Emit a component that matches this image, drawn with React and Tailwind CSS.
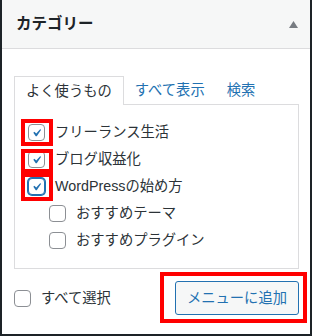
import React from "react";

// WordPress メニュー編集画面の「カテゴリー」パネル
function Check({ checked, focused }) {
  return (
    <span
      className={`flex h-[17px] w-[17px] shrink-0 items-center justify-center rounded-[4px] border bg-white ${
        focused ? "border-[#2271b1] shadow-[0_0_0_1px_#2271b1]" : "border-[#8c8f94]"
      }`}
    >
      {checked && (
        <svg viewBox="0 0 20 20" className="h-[18px] w-[18px] fill-[#2271b1]">
          <path d="M14.83 4.89l1.34.94-5.81 8.38H9.02L5.78 9.67l1.34-1.25 2.57 2.4z" />
        </svg>
      )}
    </span>
  );
}

function Row({ label, checked, focused, child }) {
  return (
    <div className={`flex h-[27px] items-center gap-[10px] ${child ? "ml-[21px]" : ""}`}>
      <Check checked={checked} focused={focused} />
      <span className="text-[14.3px] leading-none">{label}</span>
    </div>
  );
}

const items = [
  { label: "フリーランス生活", checked: true },
  { label: "ブログ収益化", checked: true },
  { label: "WordPressの始め方", checked: true, focused: true },
  { label: "おすすめテーマ", child: true },
  { label: "おすすめプラグイン", child: true },
];

export default function App() {
  return (
    <div className="relative h-[336px] w-[312px] overflow-hidden border-x-2 border-b-2 border-[#1d2327] bg-white font-['Liberation_Sans','Noto_Sans_CJK_JP',sans-serif] text-[#2c3338]">
      {/* Header */}
      <div className="flex h-[49px] items-center justify-between border-b border-[#dcdcde] bg-[#f6f7f7] pl-[14px] pr-[12px]">
        <h3 className="text-[15.5px] font-semibold leading-none text-[#1d2327]">カテゴリー</h3>
        <svg width="9" height="7" viewBox="0 0 9 7" className="fill-[#787c82]">
          <path d="M4.5 0L9 7H0z" />
        </svg>
      </div>

      {/* Body */}
      <div className="pl-[12px] pr-[11px] pt-[27px]">
        <div className="flex h-[28px] items-end text-[14.3px] leading-none">
          <div className="relative z-10 -mb-px flex h-[29px] items-center border border-b-0 border-[#dcdcde] bg-white px-[11px]">
            よく使うもの
          </div>
          <div className="flex h-[28px] items-center px-[11px] text-[#2271b1]">すべて表示</div>
          <div className="flex h-[28px] items-center px-[11px] text-[#2271b1]">検索</div>
        </div>
        <div className="h-[165px] border border-[#dcdcde] pl-[13px] pt-[14px]">
          {items.map((it) => (
            <Row key={it.label} {...it} />
          ))}
        </div>

        <div className="mt-[12px] flex items-center justify-between">
          <div className="flex items-center gap-[10px]">
            <Check />
            <span className="text-[14.3px] leading-none">すべて選択</span>
          </div>
          <button className="h-[34px] rounded-[3px] border border-[#2271b1] bg-[#f6f7f7] px-[11px] text-[14.3px] leading-none text-[#2271b1]">
            メニューに追加
          </button>
        </div>
      </div>

      {/* 赤枠の注釈 */}
      <div className="absolute left-[19px] top-[119px] h-[27px] w-[32px] border-4 border-[#ff0000]" />
      <div className="absolute left-[19px] top-[149px] h-[24px] w-[32px] border-4 border-[#ff0000]" />
      <div className="absolute left-[19px] top-[173px] h-[28px] w-[32px] border-4 border-[#ff0000]" />
      <div className="absolute left-[158px] top-[272px] h-[51px] w-[147px] border-4 border-[#ff0000]" />
    </div>
  );
}
